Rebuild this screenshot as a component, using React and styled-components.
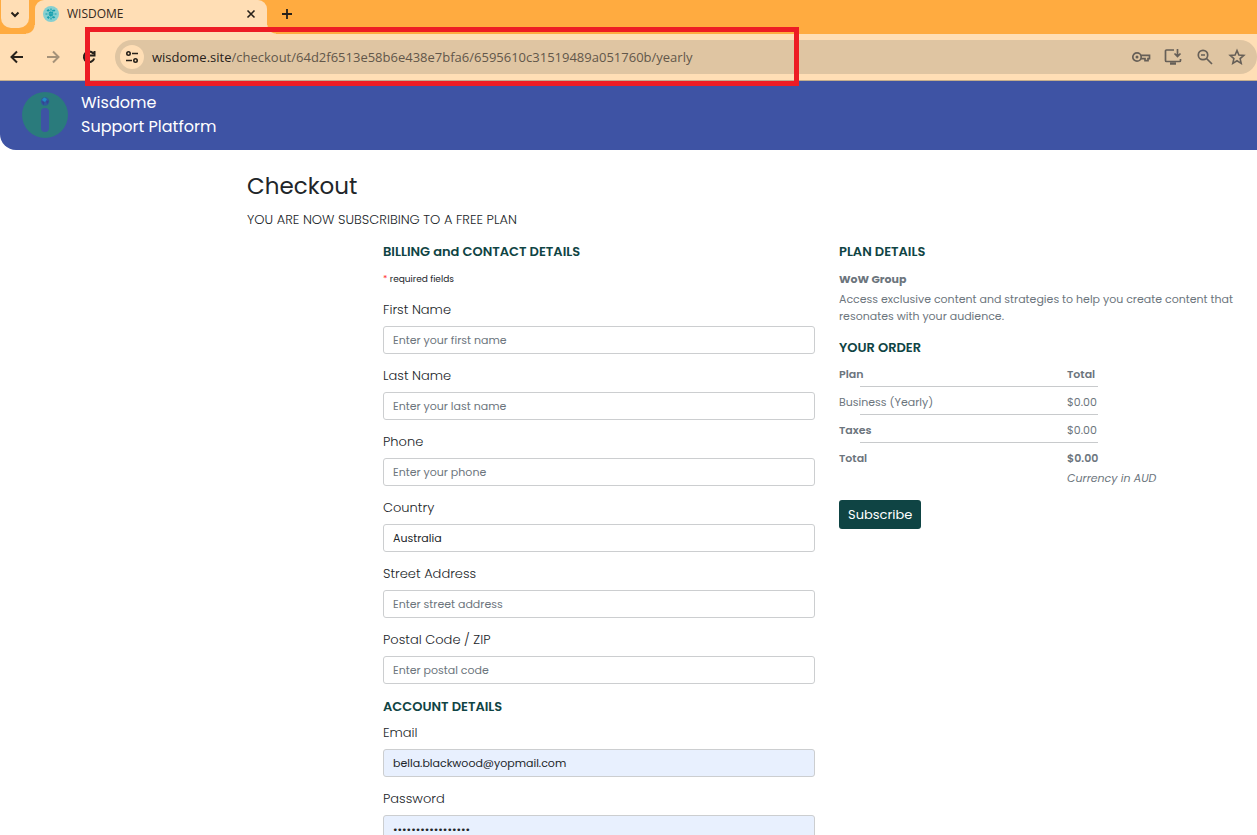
import React from "react";
import styled, { createGlobalStyle, css } from "styled-components";

const GlobalStyle = createGlobalStyle`
  *, *::before, *::after { box-sizing: border-box; }
  body { margin: 0; background: #fff; font-family: Poppins, Inter, sans-serif; color: #212529; }
  button, input, select { font: inherit; }
`;

const Window = styled.div`
  position: relative;
  display: flex;
  flex-direction: column;
  height: 100vh;
  overflow: hidden;
`;

const TabStrip = styled.div`
  display: flex;
  align-items: flex-start;
  height: 34px;
  padding-left: 1px;
  background: #ffab40;
`;

const IconButton = styled.button`
  display: flex;
  align-items: center;
  justify-content: center;
  width: ${(p) => p.$size || 20}px;
  height: ${(p) => p.$size || 20}px;
  padding: 0;
  border: 0;
  border-radius: ${(p) => p.$radius || "50%"};
  background: ${(p) => p.$bg || "transparent"};
  color: ${(p) => p.$color || "#27211a"};
  svg { display: block; }
`;

const Tab = styled.div`
  position: relative;
  display: flex;
  align-items: center;
  width: 232px;
  height: 34px;
  margin-left: 6px;
  padding: 0 6px 6px 8px;
  border-radius: 9px 9px 0 0;
  background: #ffdeb5;
  color: #33291c;
  font: 12px/16px "Segoe UI", "Open Sans", sans-serif;

  &::before, &::after {
    content: "";
    position: absolute;
    bottom: 0;
    width: 9px;
    height: 9px;
  }
  &::before { right: 100%; background: radial-gradient(circle at 0 0, #ffab40 8px, #ffdeb5 9px); }
  &::after { left: 100%; background: radial-gradient(circle at 100% 0, #ffab40 8px, #ffdeb5 9px); }
`;

const TabTitle = styled.span`
  flex: 1;
  margin-left: 8px;
`;

const NewTab = styled.div`
  padding: 4px 0 0 10px;
`;

const Toolbar = styled.div`
  display: flex;
  align-items: center;
  height: 47px;
  padding-left: 7px;
  border-bottom: 1px solid #c4ad8d;
  background: #ffdeb5;
`;

const NavButtons = styled.div`
  display: flex;
  gap: 16px;
  margin-right: 16px;
`;

const AddressBar = styled.div`
  display: flex;
  flex: 1;
  align-items: center;
  height: 34px;
  padding: 0 10px 0 5px;
  border-radius: 17px;
  background: #dfc5a2;
`;

const Address = styled.label`
  display: flex;
  flex: 1;
  margin-left: 8px;
  color: #27211a;
  font: 13px/20px "Segoe UI", "Open Sans", sans-serif;
`;

const AddressInput = styled.input`
  flex: 1;
  min-width: 0;
  padding: 0;
  border: 0;
  outline: 0;
  background: transparent;
  color: #62574a;
`;

const AddressActions = styled.div`
  display: flex;
  gap: 12px;
`;

const Highlight = styled.div`
  position: absolute;
  top: 27px;
  left: 85px;
  width: 714px;
  height: 59px;
  border: 5px solid #ed1c24;
  pointer-events: none;
`;

const Page = styled.div`
  flex: 1;
  min-height: 0;
  overflow-y: auto;
  scrollbar-width: none;
`;

const SiteHeader = styled.header`
  display: flex;
  align-items: center;
  gap: 13px;
  height: 69px;
  padding: 0 0 2px 22px;
  border-bottom-left-radius: 16px;
  background: #3e53a4;
  color: #fff;
`;

const Brand = styled.div`
  font-size: 16px;
  font-weight: 400;
  line-height: 24px;
`;

const Main = styled.main`
  padding: 21px 17px 24px 247px;
`;

const Title = styled.h1`
  margin: 0;
  font-size: 23px;
  font-weight: 400;
  line-height: 30px;
`;

const Notice = styled.p`
  margin: 9px 0 12px;
  font-size: 13px;
  font-weight: 300;
  line-height: 20px;
`;

const Columns = styled.div`
  display: grid;
  grid-template-columns: 432fr 401fr;
  gap: 24px;
  margin-left: 136px;
`;

const SectionTitle = styled.h2`
  margin: 0 0 8px;
  color: #0f4444;
  font-size: 13px;
  font-weight: 600;
  line-height: 20px;

  * + & { margin-bottom: 6px; padding-top: 1px; }
`;

const Required = styled.p`
  margin: 0 0 12px;
  font-size: 9px;
  line-height: 18px;
  span { color: #f33; }
`;

const Field = styled.div`
  display: flex;
  flex-direction: column;
  gap: 6px;
  margin-bottom: 12px;
`;

const Label = styled.label`
  font-size: 13px;
  font-weight: 300;
  line-height: 20px;
`;

const control = css`
  width: 100%;
  height: 28px;
  padding: 0 9px;
  border: 1px solid #ccced0;
  border-radius: 3px;
  outline: 0;
  background: ${(p) => (p.$filled ? "#e8f0fe" : "#fff")};
  color: #212529;
  font-size: 11px;
`;

const Input = styled.input`
  ${control}
  &::placeholder { color: #6c757d; opacity: 1; }
`;

const Select = styled.select`
  ${control}
  appearance: none;
`;

const PlanText = styled.div`
  margin-bottom: 12px;
  color: #6c757d;
  font-size: 11px;
  line-height: 17px;
  h3 { margin: 0 0 3px; font-size: 11px; font-weight: 700; line-height: 18px; }
  p { margin: 0; }
`;

const OrderTable = styled.table`
  border-collapse: collapse;
  margin-bottom: 12px;
  color: #6c757d;
  font-size: 11px;
  line-height: 20px;
  text-align: left;
  th, td { padding: 0; }
  th { font-weight: 600; }
  thead th:first-child { width: 228px; }
`;

const Rule = styled.hr`
  width: 238px;
  height: 1px;
  margin: 2px 0 5px 21px;
  border: 0;
  background: #c8cacc;
`;

const SubscribeButton = styled.button`
  height: 29px;
  padding: 0 9px;
  border: 0;
  border-radius: 3px;
  background: #0f4444;
  color: #fff;
  font-size: 13px;
  font-weight: 400;
`;

const Stroke = ({ size = 16, width = 2, children }) => (
  <svg width={size} height={size} viewBox={`0 0 ${size} ${size}`} fill="none" stroke="currentColor" strokeWidth={width} aria-hidden="true">
    {children}
  </svg>
);

const Favicon = () => (
  <svg width="16" height="16" viewBox="0 0 16 16" aria-hidden="true">
    <circle cx="8" cy="8" r="8" fill="#86cfd0" />
    <g stroke="#149fae" strokeWidth="1.2" strokeDasharray="2 1">
      <path d="M8 2.500v11M2.500 8h11M4 4l8 8M12 4l-8 8M5 3.500l3 3 3-3M5 12.500l3-3 3 3" fill="none" />
    </g>
  </svg>
);

const Logo = () => (
  <svg width="46" height="46" viewBox="0 0 46 46" aria-hidden="true">
    <circle cx="23" cy="23" r="23" fill="#2a7b7c" />
    <rect x="19" y="16" width="8" height="24" rx="4" fill="#3e53a4" />
    <circle cx="23" cy="9.500" r="4.200" fill="#2f5a9c" />
    <path d="M22 5.500l3 1.500-2 3-3-2z" fill="#1e8bc9" />
    <path d="M19.500 9l3 1.500-1 2.500zM24 9.500l3-1-1.500 3.500z" fill="#374393" />
  </svg>
);

const billing = [
  ["first", "First Name", "Enter your first name"],
  ["last", "Last Name", "Enter your last name"],
  ["phone", "Phone", "Enter your phone"],
  ["country", "Country"],
  ["street", "Street Address", "Enter street address"],
  ["postal", "Postal Code / ZIP", "Enter postal code"],
];

const RuleRow = () => (
  <tr><td colSpan={2}><Rule /></td></tr>
);

export default function App() {
  return (
    <Window>
      <GlobalStyle />
      <TabStrip>
        <IconButton $size={28} $radius="0 0 10px 10px" $bg="#ffdeb5" aria-label="Search tabs">
          <Stroke><path d="M4.500 6.500L8 10l3.500-3.500" /></Stroke>
        </IconButton>
        <Tab>
          <Favicon />
          <TabTitle>WISDOME</TabTitle>
          <IconButton aria-label="Close tab">
            <Stroke width={1.6}><path d="M4.500 4.500l7 7M11.500 4.500l-7 7" /></Stroke>
          </IconButton>
        </Tab>
        <NewTab>
          <IconButton aria-label="New tab">
            <Stroke width={1.8}><path d="M8 3v10M3 8h10" /></Stroke>
          </IconButton>
        </NewTab>
      </TabStrip>
      <Toolbar>
        <NavButtons>
          <IconButton aria-label="Back">
            <Stroke><path d="M14 8H3M8 2.500L2.500 8 8 13.500" /></Stroke>
          </IconButton>
          <IconButton aria-label="Forward" $color="#a59279">
            <Stroke><path d="M2 8h11M8 2.500L13.500 8 8 13.500" /></Stroke>
          </IconButton>
          <IconButton aria-label="Reload">
            <Stroke><path d="M12.300 4.500A5.300 5.300 0 1 0 13.200 9.500M13.500 2v4.500H9" /></Stroke>
          </IconButton>
        </NavButtons>
        <AddressBar>
          <IconButton $size={24} $bg="#ffdeb5" aria-label="Site information">
            <Stroke width={1.6}>
              <circle cx="4.500" cy="4.500" r="1.700" />
              <path d="M8 4.500h6M2 11.500h6" />
              <circle cx="11.500" cy="11.500" r="1.700" />
            </Stroke>
          </IconButton>
          <Address>
            wisdome.site
            <AddressInput
              aria-label="Address"
              defaultValue="/checkout/64d2f6513e58b6e438e7bfa6/6595610c31519489a051760b/yearly"
            />
          </Address>
          <AddressActions>
            <IconButton $color="#665f57" aria-label="Passwords">
              <Stroke size={20} width={1.7}>
                <circle cx="6" cy="10" r="4.200" />
                <circle cx="6" cy="10" r="1.500" fill="currentColor" stroke="none" />
                <path d="M10 8.300h8.500v3.400H17v2h-3v-2h-4" />
              </Stroke>
            </IconButton>
            <IconButton $color="#665f57" aria-label="Install app">
              <Stroke size={20} width={1.7}>
                <path d="M11 3H3.500q-1 0-1 1v9.500q0 1 1 1h13q1 0 1-1V12M14.500 2v7M11.500 6.500l3 3 3-3" />
                <path d="M7 16.500h6" strokeWidth="2.500" />
              </Stroke>
            </IconButton>
            <IconButton $color="#665f57" aria-label="Zoom">
              <Stroke size={20} width={1.7}>
                <circle cx="8" cy="8" r="4.700" />
                <path d="M11.500 11.500l5.500 5.500M6 8h4" />
              </Stroke>
            </IconButton>
            <IconButton $color="#665f57" aria-label="Bookmark">
              <Stroke size={20} width={1.600}>
                <path d="M10 3.500l1.900 4.500 4.900.4-3.700 3.200 1.100 4.800L10 13.800l-4.200 2.600 1.100-4.800-3.700-3.200 4.900-.4z" />
              </Stroke>
            </IconButton>
          </AddressActions>
        </AddressBar>
      </Toolbar>
      <Page>
        <SiteHeader>
          <Logo />
          <Brand>Wisdome<br />Support Platform</Brand>
        </SiteHeader>
        <Main>
          <Title>Checkout</Title>
          <Notice>YOU ARE NOW SUBSCRIBING TO A FREE PLAN</Notice>
          <Columns>
            <section>
              <SectionTitle>BILLING and CONTACT DETAILS</SectionTitle>
              <Required><span>*</span> required fields</Required>
              {billing.map(([id, label, placeholder]) => (
                <Field key={id}>
                  <Label htmlFor={id}>{label}</Label>
                  {placeholder ? (
                    <Input id={id} placeholder={placeholder} />
                  ) : (
                    <Select id={id}><option>Australia</option></Select>
                  )}
                </Field>
              ))}
              <SectionTitle>ACCOUNT DETAILS</SectionTitle>
              <Field>
                <Label htmlFor="email">Email</Label>
                <Input id="email" type="email" $filled defaultValue="bella.blackwood@yopmail.com" />
              </Field>
              <Field>
                <Label htmlFor="password">Password</Label>
                <Input id="password" type="password" $filled defaultValue="12345678901234567" />
              </Field>
            </section>
            <section>
              <SectionTitle>PLAN DETAILS</SectionTitle>
              <PlanText>
                <h3>WoW Group</h3>
                <p>Access exclusive content and strategies to help you create content that resonates with your audience.</p>
              </PlanText>
              <SectionTitle>YOUR ORDER</SectionTitle>
              <OrderTable>
                <thead>
                  <tr><th>Plan</th><th>Total</th></tr>
                </thead>
                <tbody>
                  <RuleRow />
                  <tr><td>Business (Yearly)</td><td>$0.00</td></tr>
                  <RuleRow />
                  <tr><th>Taxes</th><td>$0.00</td></tr>
                  <RuleRow />
                  <tr><th>Total</th><th>$0.00</th></tr>
                  <tr><td /><td><em>Currency in AUD</em></td></tr>
                </tbody>
              </OrderTable>
              <SubscribeButton>Subscribe</SubscribeButton>
            </section>
          </Columns>
        </Main>
      </Page>
      <Highlight />
    </Window>
  );
}
